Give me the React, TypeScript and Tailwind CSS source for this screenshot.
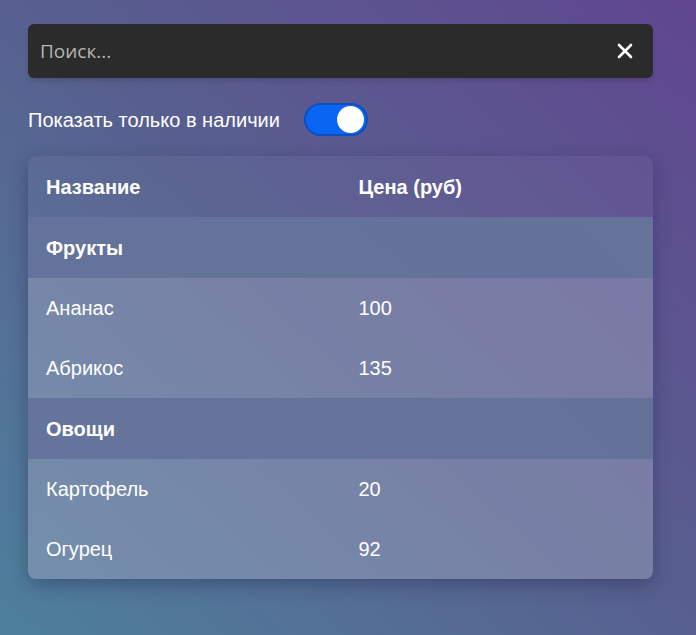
import { useState } from "react";

const rows: { category: string; items: { name: string; price: number }[] }[] = [
  {
    category: "Фрукты",
    items: [
      { name: "Ананас", price: 100 },
      { name: "Абрикос", price: 135 },
    ],
  },
  {
    category: "Овощи",
    items: [
      { name: "Картофель", price: 20 },
      { name: "Огурец", price: 92 },
    ],
  },
];

export default function App() {
  const [query, setQuery] = useState("");
  const [inStock, setInStock] = useState(true);

  return (
    <div className="min-h-[635px] w-full bg-gradient-to-tr from-[#4d809c] via-[#57608f] to-[#604690] pl-7 pr-[43px] pt-6 font-['Liberation_Sans',Arial,sans-serif] text-white">
      <div className="flex h-[54px] items-center rounded-md bg-[#2b2b2b] pl-3 pr-5 shadow-md">
        <input
          value={query}
          onChange={(e) => setQuery(e.target.value)}
          placeholder="Поиск..."
          className="flex-1 bg-transparent font-['Open_Sans',sans-serif] text-[19px] text-white outline-none placeholder:text-[#b5b5b5]"
        />
        <button onClick={() => setQuery("")} className="text-white">
          <svg width="16" height="16" viewBox="0 0 16 16" fill="none" stroke="currentColor" strokeWidth="2.6" strokeLinecap="round">
            <path d="M2 2 L14 14 M14 2 L2 14" />
          </svg>
        </button>
      </div>

      <div className="mt-[25px] flex items-center gap-6">
        <span className="text-[20px]">Показать только в наличии</span>
        <button
          onClick={() => setInStock(!inStock)}
          className={`flex h-[33px] w-[64px] items-center rounded-full border-2 border-[#0b4fc0] px-[2px] ${
            inStock ? "justify-end bg-[#0a66f2]" : "justify-start bg-gray-400"
          }`}
        >
          <span className="h-[27px] w-[27px] rounded-full bg-white" />
        </button>
      </div>

      <div className="mt-[20px] overflow-hidden rounded-lg shadow-[0_6px_18px_rgba(30,30,70,0.35)]">
        <table className="w-full table-fixed border-collapse text-[20px]">
          <thead>
            <tr className="h-[61px] bg-white/[0.03]">
              <th className="pl-[18px] text-left font-bold">Название</th>
              <th className="pl-[18px] text-left font-bold">Цена (руб)</th>
            </tr>
          </thead>
          <tbody>
            {rows.map((group) => (
              <>
                <tr key={group.category} className="h-[61px] bg-[#65749b]/95">
                  <td colSpan={2} className="pl-[18px] font-bold">
                    {group.category}
                  </td>
                </tr>
                {group.items.map((item) => (
                  <tr key={item.name} className="h-[60px] bg-[#a0a6c0]/45">
                    <td className="pl-[18px]">{item.name}</td>
                    <td className="pl-[18px]">{item.price}</td>
                  </tr>
                ))}
              </>
            ))}
          </tbody>
        </table>
      </div>
    </div>
  );
}
